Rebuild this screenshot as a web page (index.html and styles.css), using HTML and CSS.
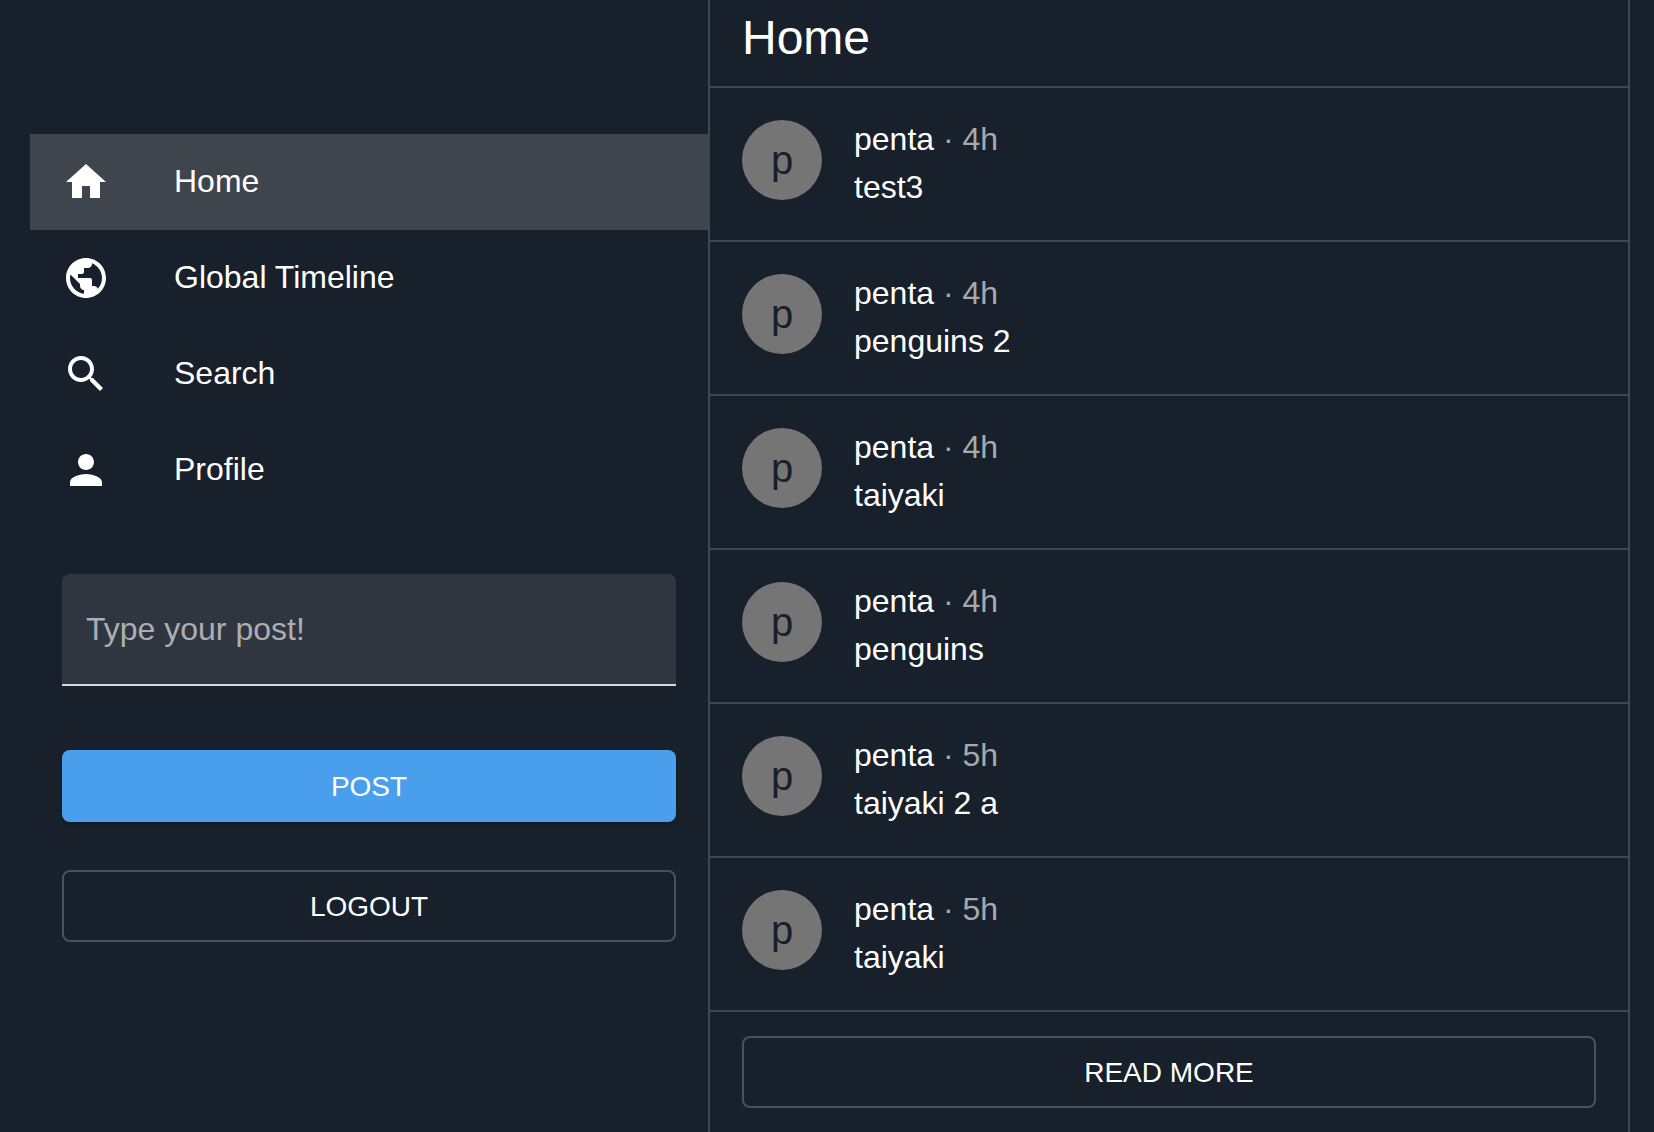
FILE: index.html
```html
<!DOCTYPE html>
<html lang="en">
<head>
<meta charset="utf-8">
<title>Home</title>
<link rel="stylesheet" href="styles.css">
</head>
<body>
<div class="app">
  <aside class="sidebar">
    <nav class="nav">
      <a class="nav-item active"><svg class="icon" viewBox="0 0 24 24"><path d="M10 20v-6h4v6h5v-8h3L12 3 2 12h3v8z"/></svg><span class="nav-label">Home</span></a>
      <a class="nav-item"><svg class="icon" viewBox="0 0 24 24"><path d="M12 2C6.48 2 2 6.48 2 12s4.48 10 10 10 10-4.48 10-10S17.52 2 12 2zm-1 17.93c-3.95-.49-7-3.85-7-7.93 0-.62.08-1.21.21-1.79L9 15v1c0 1.1.9 2 2 2v1.93zm6.9-2.54c-.26-.81-1-1.39-1.9-1.39h-1v-3c0-.55-.45-1-1-1H8v-2h2c.55 0 1-.45 1-1V7h2c1.1 0 2-.9 2-2v-.41c2.93 1.19 5 4.06 5 7.41 0 2.08-.8 3.97-2.1 5.39z"/></svg><span class="nav-label">Global Timeline</span></a>
      <a class="nav-item"><svg class="icon" viewBox="0 0 24 24"><path d="M15.5 14h-.79l-.28-.27C15.41 12.59 16 11.11 16 9.5 16 5.91 13.09 3 9.5 3S3 5.91 3 9.5 5.91 16 9.5 16c1.61 0 3.09-.59 4.23-1.57l.27.28v.79l5 4.99L20.49 19l-4.99-5zm-6 0C7.01 14 5 11.99 5 9.5S7.01 5 9.5 5 14 7.01 14 9.5 11.99 14 9.5 14z"/></svg><span class="nav-label">Search</span></a>
      <a class="nav-item"><svg class="icon" viewBox="0 0 24 24"><path d="M12 12c2.21 0 4-1.79 4-4s-1.79-4-4-4-4 1.79-4 4 1.79 4 4 4zm0 2c-2.67 0-8 1.34-8 4v2h16v-2c0-2.66-5.33-4-8-4z"/></svg><span class="nav-label">Profile</span></a>
    </nav>
    <form class="composer">
      <div class="field">Type your post!</div>
      <div class="btn btn-primary">Post</div>
      <div class="btn btn-outline">Logout</div>
    </form>
  </aside>
  <main class="feed">
    <header class="feed-header"><h1>Home</h1></header>
    <article class="post"><div class="avatar">p</div><div class="post-text"><div>penta<span class="meta"> · 4h</span></div><div>test3</div></div></article>
    <article class="post"><div class="avatar">p</div><div class="post-text"><div>penta<span class="meta"> · 4h</span></div><div>penguins 2</div></div></article>
    <article class="post"><div class="avatar">p</div><div class="post-text"><div>penta<span class="meta"> · 4h</span></div><div>taiyaki</div></div></article>
    <article class="post"><div class="avatar">p</div><div class="post-text"><div>penta<span class="meta"> · 4h</span></div><div>penguins</div></div></article>
    <article class="post"><div class="avatar">p</div><div class="post-text"><div>penta<span class="meta"> · 5h</span></div><div>taiyaki 2 a</div></div></article>
    <article class="post"><div class="avatar">p</div><div class="post-text"><div>penta<span class="meta"> · 5h</span></div><div>taiyaki</div></div></article>
    <div class="more"><div class="btn btn-outline">Read more</div></div>
  </main>
</div>
</body>
</html>
```
FILE: styles.css
```css
* { box-sizing: border-box; }
html, body { margin: 0; height: 100%; overflow: hidden; }
body {
  background: #18202b;
  color: #fff;
  font-family: "Liberation Sans", Arial, sans-serif;
  font-size: 32px;
  line-height: 48px;
}
.app { display: flex; height: 1132px; padding-left: 30px; }
.sidebar { width: 678px; flex: none; padding-top: 134px; }
.nav { display: flex; flex-direction: column; }
.nav-item { display: flex; align-items: center; height: 96px; padding-left: 32px; }
.nav-item.active { background: #3e454d; }
.nav-label { padding-bottom: 2px; }
.icon { width: 48px; height: 48px; fill: #fff; margin-right: 64px; flex: none; }
.composer { display: flex; flex-direction: column; padding: 56px 32px 0; }
.field {
  height: 112px;
  padding: 31px 24px;
  background: #2f3640;
  border-bottom: 2px solid #d5d6d8;
  border-radius: 8px 8px 0 0;
  color: #abaeb2;
  margin-bottom: 64px;
}
.btn {
  display: flex;
  align-items: center;
  justify-content: center;
  height: 72px;
  padding-top: 2px;
  border-radius: 8px;
  font-size: 28px;
  line-height: 1;
  text-transform: uppercase;
}
.btn-primary { background: #4a9fec; margin-bottom: 48px; box-shadow: 0 2px 4px rgba(0,0,0,.2); }
.btn-outline { border: 2px solid #4b5159; }
.feed {
  width: 922px;
  flex: none;
  border-left: 2px solid #3c474e;
  border-right: 2px solid #3c474e;
}
.feed-header { height: 88px; border-bottom: 2px solid #3c474e; padding: 14px 32px 0; }
.feed-header h1 { margin: 0; font-size: 48px; font-weight: 400; line-height: 48px; }
.post { display: flex; height: 154px; padding: 32px 32px 0; border-bottom: 2px solid #3c474e; }
.avatar {
  width: 80px;
  height: 80px;
  border-radius: 50%;
  background: #757575;
  color: #18202b;
  font-size: 40px;
  display: flex;
  align-items: center;
  justify-content: center;
  flex: none;
  margin-right: 32px;
}
.post-text { margin-top: -5px; }
.meta { color: #a6a9ad; }
.more { padding: 24px 32px; }
```
